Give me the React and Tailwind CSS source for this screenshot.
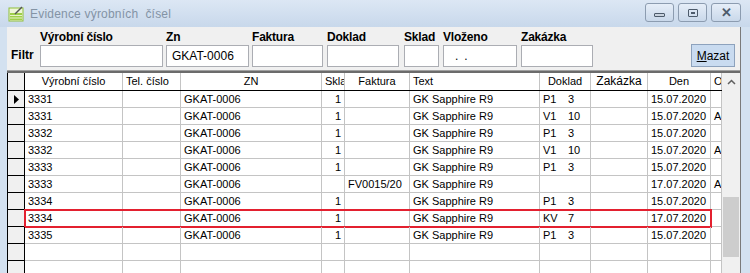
import React from 'react';

const cols = [
  { w: 98, head: 'Výrobní číslo', ha: 'center', a: 'left' },
  { w: 58, head: 'Tel. číslo', ha: 'left', a: 'left' },
  { w: 141, head: 'ZN', ha: 'center', a: 'left' },
  { w: 23, head: 'Sklad', ha: 'left', a: 'right' },
  { w: 65, head: 'Faktura', ha: 'center', a: 'left' },
  { w: 130, head: 'Text', ha: 'left', a: 'left' },
  { w: 51, head: 'Doklad', ha: 'center', a: 'left' },
  { w: 57, head: 'Zakázka', ha: 'center', a: 'left' },
  { w: 63, head: 'Den', ha: 'center', a: 'left' },
  { w: 11, head: 'Or', ha: 'left', a: 'left' },
];

const widthCls = {
  98: 'w-[98px]',
  58: 'w-[58px]',
  141: 'w-[141px]',
  23: 'w-[23px]',
  65: 'w-[65px]',
  130: 'w-[130px]',
  51: 'w-[51px]',
  57: 'w-[57px]',
  63: 'w-[63px]',
  11: 'w-[11px]',
};

const rows = [
  ['3331', '', 'GKAT-0006', '1', '', 'GK Sapphire R9', ['P1', '3'], '', '15.07.2020', ''],
  ['3331', '', 'GKAT-0006', '1', '', 'GK Sapphire R9', ['V1', '10'], '', '15.07.2020', 'Al'],
  ['3332', '', 'GKAT-0006', '1', '', 'GK Sapphire R9', ['P1', '3'], '', '15.07.2020', ''],
  ['3332', '', 'GKAT-0006', '1', '', 'GK Sapphire R9', ['V1', '10'], '', '15.07.2020', 'Al'],
  ['3333', '', 'GKAT-0006', '1', '', 'GK Sapphire R9', ['P1', '3'], '', '15.07.2020', ''],
  ['3333', '', 'GKAT-0006', '', 'FV0015/20', 'GK Sapphire R9', null, '', '17.07.2020', 'Al'],
  ['3334', '', 'GKAT-0006', '1', '', 'GK Sapphire R9', ['P1', '3'], '', '15.07.2020', ''],
  ['3334', '', 'GKAT-0006', '1', '', 'GK Sapphire R9', ['KV', '7'], '', '17.07.2020', ''],
  ['3335', '', 'GKAT-0006', '1', '', 'GK Sapphire R9', ['P1', '3'], '', '15.07.2020', ''],
  null,
  null,
];

const fields = [
  { label: 'Výrobní číslo', wrap: 'w-[126px]', inp: 'w-[123px]', value: '' },
  { label: 'Zn', wrap: 'w-[86px]', inp: 'w-[83px]', value: 'GKAT-0006' },
  { label: 'Faktura', wrap: 'w-[75px]', inp: 'w-[71px]', value: '' },
  { label: 'Doklad', wrap: 'w-[77px]', inp: 'w-[72px]', value: '' },
  { label: 'Sklad', wrap: 'w-[39px]', inp: 'w-[35px]', value: '' },
  { label: 'Vloženo', wrap: 'w-[78px]', inp: 'w-[74px]', value: 'dots' },
  { label: 'Zakázka', wrap: 'w-[72px]', inp: 'w-[72px]', value: '' },
];

function AppIcon() {
  return (
    <svg width="16" height="16" viewBox="0 0 16 16">
      <rect x="1" y="2" width="14" height="13" fill="#eef6d8" stroke="#8fbf3a" />
      <rect x="2" y="7" width="12" height="7" fill="#9fcf4a" />
      <line x1="2" y1="9.5" x2="14" y2="9.5" stroke="#e8f4c8" />
      <line x1="2" y1="12" x2="14" y2="12" stroke="#e8f4c8" />
      <line x1="7" y1="8" x2="14" y2="1" stroke="#555" strokeWidth="1.5" />
    </svg>
  );
}

function WinButton({ children, w }) {
  return (
    <div
      className={`${w} h-[19px] rounded-[3px] border border-[#8c9cb0] bg-gradient-to-b from-[#e6eef8] to-[#c9d8ea] flex items-center justify-center`}
    >
      {children}
    </div>
  );
}

function GridRow({ row, first, marked }) {
  return (
    <div className="flex h-[17px] relative">
      <div className="w-[18px] shrink-0 bg-[#f0f0f0] border-l border-r border-b border-black flex items-center justify-center">
        {first && (
          <svg width="7" height="9" viewBox="0 0 7 9">
            <path d="M1 0 L6 4.5 L1 9 Z" fill="#000" />
          </svg>
        )}
      </div>
      {cols.map((c, i) => {
        const v = row ? row[i] : '';
        return (
          <div
            key={i}
            className={`${widthCls[c.w]} shrink-0 border-r border-b border-[#c4c4c4] overflow-hidden whitespace-nowrap leading-[16px] px-[3px] ${
              c.a === 'right' ? 'text-right' : 'text-left'
            }`}
          >
            {Array.isArray(v) ? (
              <span className="flex">
                <span className="w-[25px]">{v[0]}</span>
                <span>{v[1]}</span>
              </span>
            ) : (
              v
            )}
          </div>
        );
      })}
      {marked && (
        <div className="absolute left-[17px] top-[-1px] w-[688px] h-[19px] border-2 border-[#e3202f] pointer-events-none" />
      )}
    </div>
  );
}

export default function App() {
  return (
    <div className="w-[750px] h-[273px] overflow-hidden bg-[#d3e1f0] font-['Liberation_Sans',Arial,sans-serif] text-[11px] text-black select-none">
      {/* title bar */}
      <div className="h-[27px] flex items-center bg-gradient-to-b from-[#dce7f4] to-[#c8d8eb]">
        <div className="ml-[8px] mt-[1px]">
          <AppIcon />
        </div>
        <div className="ml-[6px] text-[12px] text-[#8393a5] tracking-[0.2px]">Evidence výrobních&nbsp; čísel</div>
        <div className="ml-auto mr-[9px] flex gap-[4px] mt-[-2px]">
          <WinButton w="w-[29px]">
            <div className="w-[11px] h-[4px] border border-[#4d5b6b] rounded-[1px] bg-[#c8d2de] mt-[4px]" />
          </WinButton>
          <WinButton w="w-[29px]">
            <div className="w-[10px] h-[8px] border border-[#4d5b6b] rounded-[1px] flex items-center justify-center">
              <div className="w-[4px] h-[2px] bg-[#4d5b6b]" />
            </div>
          </WinButton>
          <WinButton w="w-[30px]">
            <span className="text-[13px] font-bold text-[#4d5b6b] leading-none">✕</span>
          </WinButton>
        </div>
      </div>

      {/* body */}
      <div className="flex">
        <div className="w-[7px] shrink-0" />
        <div className="w-[734px] shrink-0 border-r border-[#7a7a7a]">
          {/* filter */}
          <div className="h-[43px] bg-[#f0f0f0] flex items-start">
            <div className="w-[33px] shrink-0 pl-[4px] pt-[19px] font-bold text-[12px]">Filtr</div>
            {fields.map((f, i) => (
              <div key={i} className={`${f.wrap} shrink-0`}>
                <div className="h-[18px] pt-[2px] font-bold text-[12px] leading-[16px] tracking-[-0.2px]">{f.label}</div>
                <div
                  className={`${f.inp} h-[22px] bg-white border border-[#abadb3] px-[5px] leading-[20px] text-[12px]`}
                >
                  {f.value === 'dots' ? <span className="pl-[6px] tracking-[6px]">..</span> : f.value}
                </div>
              </div>
            ))}
            <div className="ml-auto mr-[5px] mt-[17px] w-[44px] h-[23px] bg-[#c9dbf0] border border-[#8da2bd] flex items-center justify-center text-[12px]">
              <span>
                <span className="underline">M</span>azat
              </span>
            </div>
          </div>
          <div className="h-[1px] bg-[#a0a0a0]" />
          <div className="h-[2px] bg-[#6b6b6b]" />

          {/* grid */}
          <div className="h-[200px] bg-white flex overflow-hidden">
            <div className="w-[715px] shrink-0">
              <div className="flex h-[18px] border-b border-black">
                <div className="w-[18px] shrink-0 bg-[#f0f0f0] border-l border-r border-[#000] border-b-0" />
                {cols.map((c, i) => (
                  <div
                    key={i}
                    className={`${widthCls[c.w]} shrink-0 border-r border-[#c4c4c4] overflow-hidden whitespace-nowrap leading-[17px] px-[3px] ${
                      c.ha === 'center' ? 'text-center' : 'text-left'
                    } ${c.head === 'Zakázka' ? 'text-[12px] px-0' : ''}`}
                  >
                    {c.head}
                  </div>
                ))}
              </div>
              {rows.map((r, i) => (
                <GridRow key={i} row={r} first={i === 0} marked={i === 7} />
              ))}
            </div>
            <div className="w-[19px] shrink-0 bg-[#f0f0f0] relative">
              <div className="h-[18px] flex items-center justify-center">
                <svg width="9" height="6" viewBox="0 0 9 6">
                  <path d="M1 5 L4.5 1.5 L8 5" fill="none" stroke="#606060" strokeWidth="1.5" />
                </svg>
              </div>
              <div className="absolute left-[1px] top-[124px] w-[16px] h-[60px] bg-[#cdcdcd]" />
            </div>
          </div>
        </div>
        <div className="flex-1" />
      </div>
    </div>
  );
}
